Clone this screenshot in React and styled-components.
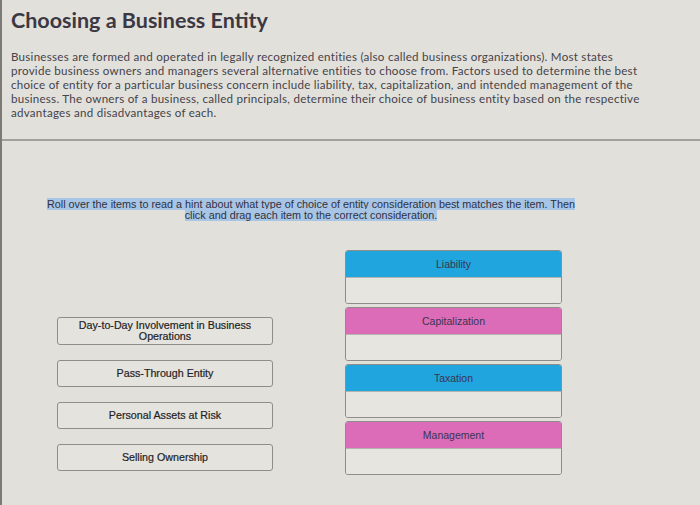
import React from "react";
import styled, { createGlobalStyle } from "styled-components";

const GlobalStyle = createGlobalStyle`
  html, body {
    margin: 0;
    padding: 0;
    background: #e2e0db;
  }
`;

const Page = styled.div`
  width: 700px;
  height: 505px;
  box-sizing: border-box;
  border-left: 2px solid #7d7b78;
  background: #e2e0db;
  overflow: hidden;
  font-family: "Liberation Sans", Arial, sans-serif;
`;

const Intro = styled.div`
  padding: 6px 0 0 9px;
  height: 141px;
  box-sizing: border-box;
  border-bottom: 2px solid #a3a19d;
`;

const Title = styled.h1`
  margin: 0;
  font-family: Lato, "Open Sans", sans-serif;
  font-weight: 700;
  font-size: 21.5px;
  line-height: 28px;
  color: #3b3843;
`;

const Lead = styled.p`
  margin: 16px 0 0;
  font-family: Lato, "Open Sans", sans-serif;
  font-size: 11.6px;
  letter-spacing: 0.25px;
  line-height: 14px;
  color: #45434a;
  white-space: nowrap;
`;

const Activity = styled.div`
  padding: 58px 0 0 43px;
`;

const Instructions = styled.p`
  margin: 0;
  width: 532px;
  text-align: center;
  font-size: 10.8px;
  line-height: 11px;
  color: #2f3140;
  white-space: nowrap;

  span {
    background: #a9c5e6;
  }
`;

const Board = styled.div`
  display: grid;
  grid-template-columns: 216px 217px;
  column-gap: 72px;
  margin: 29px 0 0 12px;
`;

const Choices = styled.div`
  display: flex;
  flex-direction: column;
  gap: 15px;
  padding-top: 67px;
`;

const Choice = styled.div`
  min-height: 27px;
  box-sizing: border-box;
  border: 1px solid #8f8d8a;
  border-radius: 3px;
  background: #e5e3de;
  display: flex;
  align-items: center;
  justify-content: center;
  text-align: center;
  padding: 2px 20px;
  font-size: 10.7px;
  line-height: 11px;
  color: #1f1f25;
  -webkit-text-stroke: 0.2px #1f1f25;
`;

const Targets = styled.div`
  display: flex;
  flex-direction: column;
  gap: 3px;
`;

const Target = styled.div`
  display: flex;
  flex-direction: column;
  border: 1px solid #8f8d8a;
  border-radius: 3px;
  overflow: hidden;
`;

const TargetHead = styled.div`
  height: 26px;
  background: ${(p) => p.$tone};
  display: flex;
  align-items: center;
  justify-content: center;
  font-size: 10.5px;
  color: #3a3450;
`;

const DropZone = styled.div`
  height: 25px;
  background: #e7e5e0;
  border-top: 1px solid #b5b3af;
`;

const BLUE = "#21a5de";
const PINK = "#dc6cb8";

const targets = [
  { label: "Liability", tone: BLUE },
  { label: "Capitalization", tone: PINK },
  { label: "Taxation", tone: BLUE },
  { label: "Management", tone: PINK },
];

const choices = [
  "Day-to-Day Involvement in Business Operations",
  "Pass-Through Entity",
  "Personal Assets at Risk",
  "Selling Ownership",
];

export default function App() {
  return (
    <Page>
      <GlobalStyle />
      <Intro>
        <Title>Choosing a Business Entity</Title>
        <Lead>
          Businesses are formed and operated in legally recognized entities (also called business organizations). Most states
          <br />
          provide business owners and managers several alternative entities to choose from. Factors used to determine the best
          <br />
          choice of entity for a particular business concern include liability, tax, capitalization, and intended management of the
          <br />
          business. The owners of a business, called principals, determine their choice of business entity based on the respective
          <br />
          advantages and disadvantages of each.
        </Lead>
      </Intro>
      <Activity>
        <Instructions>
          <span>
            Roll over the items to read a hint about what type of choice of entity consideration best matches the item. Then
            <br />
            click and drag each item to the correct consideration.
          </span>
        </Instructions>
        <Board>
          <Choices>
            {choices.map((c) => (
              <Choice key={c}>{c}</Choice>
            ))}
          </Choices>
          <Targets>
            {targets.map((t) => (
              <Target key={t.label}>
                <TargetHead $tone={t.tone}>{t.label}</TargetHead>
                <DropZone />
              </Target>
            ))}
          </Targets>
        </Board>
      </Activity>
    </Page>
  );
}
